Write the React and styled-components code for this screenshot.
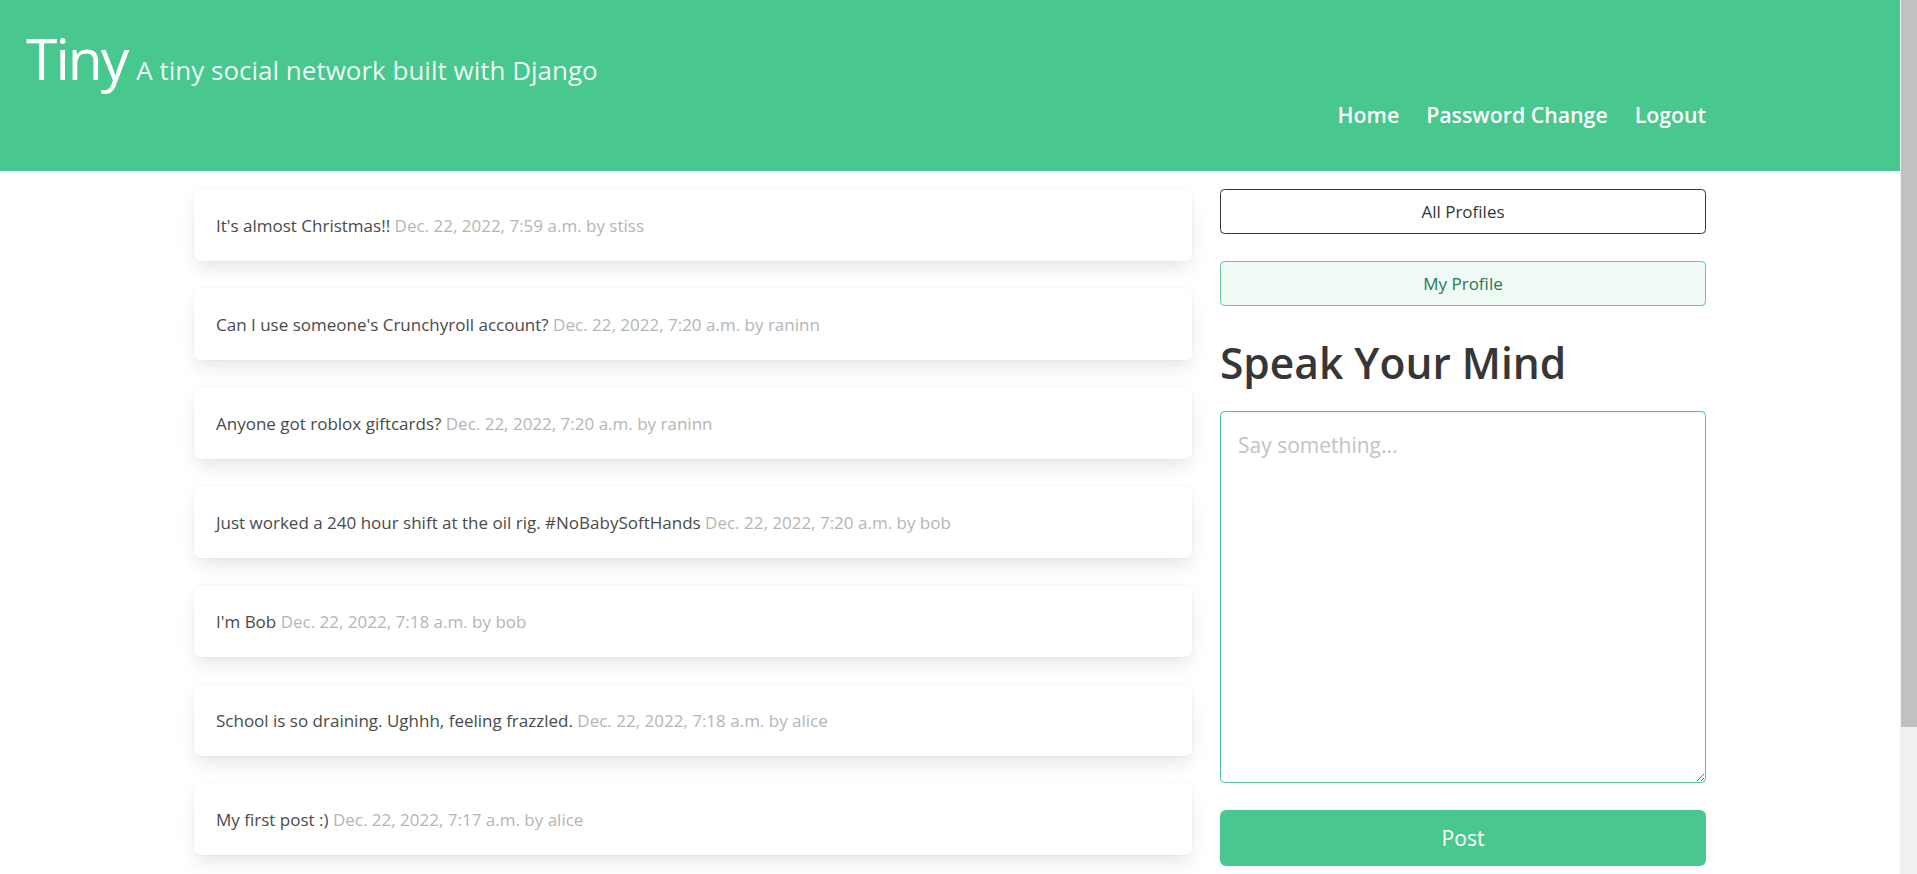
import React from 'react'
import styled, { createGlobalStyle } from 'styled-components'

const posts = [
    { body: "It's almost Christmas!!", date: 'Dec. 22, 2022, 7:59 a.m.', user: 'stiss' },
    { body: "Can I use someone's Crunchyroll account?", date: 'Dec. 22, 2022, 7:20 a.m.', user: 'raninn' },
    { body: 'Anyone got roblox giftcards?', date: 'Dec. 22, 2022, 7:20 a.m.', user: 'raninn' },
    { body: 'Just worked a 240 hour shift at the oil rig. #NoBabySoftHands', date: 'Dec. 22, 2022, 7:20 a.m.', user: 'bob' },
    { body: "I'm Bob", date: 'Dec. 22, 2022, 7:18 a.m.', user: 'bob' },
    { body: 'School is so draining. Ughhh, feeling frazzled.', date: 'Dec. 22, 2022, 7:18 a.m.', user: 'alice' },
    { body: 'My first post :)', date: 'Dec. 22, 2022, 7:17 a.m.', user: 'alice' },
]

const App = () => {
    return (
        <Page>
            <GlobalStyle />
            <Content>
                <Hero>
                    <Brand>
                        <Title>Tiny</Title>
                        <Subtitle>A tiny social network built with Django</Subtitle>
                    </Brand>
                    <Nav>
                        <NavLink href="#">Home</NavLink>
                        <NavLink href="#">Password Change</NavLink>
                        <NavLink href="#">Logout</NavLink>
                    </Nav>
                </Hero>
                <Main>
                    <Feed>
                        {posts.map((post, i) => (
                            <PostCard key={i}>
                                {post.body} <Meta>{post.date} by {post.user}</Meta>
                            </PostCard>
                        ))}
                    </Feed>
                    <Side>
                        <Button variant="dark">All Profiles</Button>
                        <Button variant="light">My Profile</Button>
                        <Heading>Speak Your Mind</Heading>
                        <TextArea placeholder="Say something..." />
                        <PostButton>Post</PostButton>
                    </Side>
                </Main>
            </Content>
            {/* the browser's scrollbar gutter, as it shows in the screenshot */}
            <ScrollRail>
                <ScrollThumb />
            </ScrollRail>
        </Page>
    )
}

export default App

const GlobalStyle = createGlobalStyle`
    html, body {
        margin: 0;
        padding: 0;
        background: #fff;
    }
    body {
        font-family: "Open Sans", "Noto Sans", sans-serif;
        font-size: 17px;
        color: #4a4a4a;
        line-height: 1.5;
    }
    * {
        box-sizing: border-box;
    }
`
const Page = styled.div`
    display: flex;
    height: 100vh;
    overflow: hidden;
`
const Content = styled.div`
    flex: 1;
    min-width: 0;
    overflow: hidden;
`
const ScrollRail = styled.div`
    width: 17px;
    flex-shrink: 0;
    background: #f1f1f1;
    padding-left: 1px;
`
const ScrollThumb = styled.div`
    height: 727px;
    background: #c1c1c1;
`
const Hero = styled.header`
    height: 171px;
    background-color: #48c78e;
    display: flex;
    flex-direction: column;
    padding: 26px 194px 0 26px;
`
const Brand = styled.div`
    display: flex;
    align-items: baseline;
    gap: 9px;
`
const Title = styled.h1`
    margin: 0;
    font-size: 57px;
    font-weight: 400;
    line-height: 1.125;
    color: #fff;
    letter-spacing: -2px;
`
const Subtitle = styled.h2`
    margin: 0;
    font-size: 26px;
    font-weight: 400;
    line-height: 1.25;
    color: rgba(255, 255, 255, 0.92);
`
const Nav = styled.nav`
    display: flex;
    justify-content: flex-end;
    gap: 27px;
    margin-top: 9px;
`
const NavLink = styled.a`
    color: #fff;
    font-size: 21.3px;
    font-weight: 600;
    text-decoration: none;
`
const Main = styled.main`
    width: 1512px;
    margin: 0 auto;
    padding: 18px 0 186px;
    display: flex;
    gap: 28px;
    align-items: flex-start;
`
const Feed = styled.section`
    width: 998px;
    display: flex;
    flex-direction: column;
    gap: 27px;
`
const PostCard = styled.div`
    background: #fff;
    border-radius: 6.75px;
    padding: 22.5px 22px;
    box-shadow: 0 9px 18px -2px rgba(10, 10, 10, 0.1), 0 0 0 1px rgba(10, 10, 10, 0.02);
    line-height: 27px;
`
const Meta = styled.span`
    color: #b5b5b5;
`
const Side = styled.aside`
    width: 486px;
    display: flex;
    flex-direction: column;
`
const Button = styled.button`
    height: 45px;
    margin-bottom: 27px;
    border-radius: 4.5px;
    font-family: inherit;
    font-size: 17px;
    cursor: pointer;
    border: 1px solid ${p => (p.variant === 'dark' ? '#363636' : '#5ccc9a')};
    background: ${p => (p.variant === 'dark' ? '#fff' : '#effaf5')};
    color: ${p => (p.variant === 'dark' ? '#363636' : '#257953')};
`
const Heading = styled.h2`
    margin: 6px 0 24px;
    font-size: 42.5px;
    font-weight: 600;
    line-height: 1.125;
    color: #363636;
`
const TextArea = styled.textarea`
    height: 372px;
    border: 1px solid #48c78e;
    border-radius: 4.5px;
    padding: 19px 17px 12px;
    font-family: inherit;
    font-size: 21px;
    color: #363636;
    box-shadow: inset 0 1px 2px rgba(10, 10, 10, 0.05);
    outline: none;
    resize: vertical;

    &::placeholder {
        color: #c3c3c3;
    }
`
const PostButton = styled.button`
    margin-top: 27px;
    height: 56px;
    border: none;
    border-radius: 6px;
    background: #48c78e;
    color: #fff;
    font-family: inherit;
    font-size: 21px;
    cursor: pointer;
`
